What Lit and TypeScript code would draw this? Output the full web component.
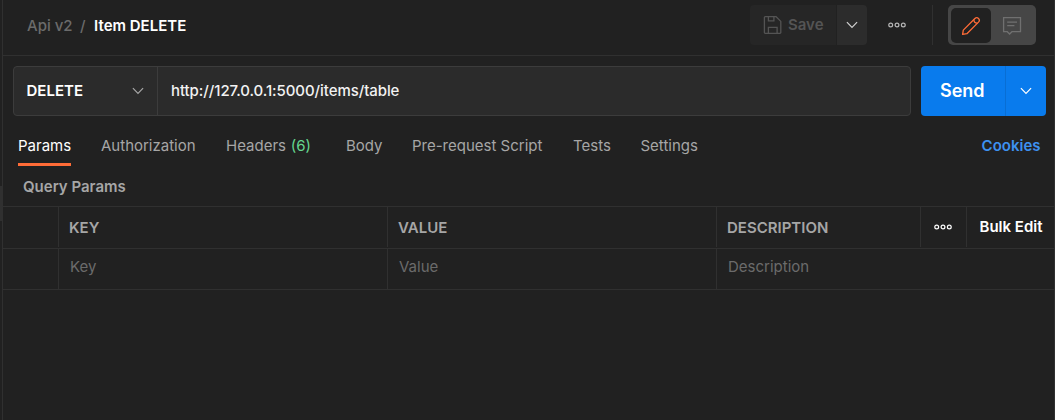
import { LitElement, html, svg, css } from "lit";
import { customElement } from "lit/decorators.js";

const chevron = html`<svg class="chev" width="12" height="8" viewBox="0 0 12 8"><path d="M.9 1.2 6 6.3l5.1-5.1" fill="none" stroke="currentColor" stroke-width="1.2"/></svg>`;
const dots = html`<svg class="dots" width="20" height="8" viewBox="0 0 20 8" fill="none" stroke="currentColor" stroke-width="1.2">
  ${[3.7, 10, 16.3].map((x) => svg`<circle cx=${x} cy="4" r="1.9"/>`)}
</svg>`;
const disk = html`<svg width="20" height="20" viewBox="0 0 20 20" fill="none" stroke="currentColor" stroke-width="1.3">
  <path d="M2.2 1.7h10.9l4.7 4.7v11.1a.8.8 0 0 1-.8.8H2.2a.8.8 0 0 1-.8-.8v-15a.8.8 0 0 1 .8-.8Z"/>
  <path d="M5.4 1.9v4h5.5v-4M5.4 18.2v-5.9h8.7v5.9"/>
</svg>`;
const pencil = html`<svg width="20" height="20" viewBox="0 0 20 20" fill="none" stroke="currentColor" stroke-width="1.3" stroke-linejoin="round">
  <path d="M1.6 18.4 2.3 14.1 13.9 2.5a2.5 2.5 0 0 1 3.6 3.6L5.9 17.7Z"/>
  <path d="M12.9 3.5c-.2 2.4 1.2 3.8 3.6 3.6"/>
</svg>`;
const comment = html`<svg width="20" height="20" viewBox="0 0 20 20" fill="none" stroke="currentColor" stroke-width="1.3">
  <path d="M1.6 1.7h16.9v14H9.9L7.6 18l-2.3-2.3H1.6Z"/><path d="M5.2 6.1h9.8M5.2 9.7h7.2"/>
</svg>`;

@customElement("app-root")
export class AppRoot extends LitElement {
  static styles = css`
    :host { display: block; font-family: Inter, sans-serif; font-size: 15px; line-height: 20px; color: #a6a6a6; }
    * { box-sizing: border-box; }
    svg { display: block; flex: none; }
    .page { display: flex; width: 1055px; height: 420px; background: #212121; overflow: hidden; white-space: nowrap; }
    .gutter { width: 3px; border-right: 1px solid #303030; padding-top: 186px; }
    .thumb { width: 2px; height: 35px; background: #303030; }
    .main { width: 1052px; border-right: 1px solid #303030; }
    .top { display: flex; height: 56px; border-bottom: 1px solid #303030; padding: 5px 18px 0 24px; }
    .crumbs { flex: 1; display: flex; padding-top: 11px; font-weight: 500; color: #6b6b6b; }
    .slash { margin: 0 8.5px 0 7.5px; }
    .name { color: #fff; font-weight: 600; }
    .save { display: flex; align-items: center; width: 86px; height: 40px; background: #262626; border-radius: 4px 0 0 4px; padding-left: 13px; color: #545454; font-weight: 600; }
    .save span { margin-left: 5px; }
    .save-more { display: flex; align-items: center; justify-content: center; width: 30px; height: 40px; margin-left: 1px; background: #2c2c2c; border-radius: 0 4px 4px 0; color: #d0d0d0; }
    .more { display: flex; align-items: center; height: 40px; width: 66px; padding-left: 20px; border-right: 1px solid #303030; color: #b8b8b8; }
    .toggle { display: flex; width: 88px; height: 40px; margin-left: 15px; padding: 3px; background: #464646; border-radius: 5px; }
    .edit, .note { display: flex; align-items: center; justify-content: center; height: 35px; }
    .edit { width: 40px; background: #212121; border-radius: 5px; color: #ff6c37; }
    .note { width: 42px; color: #707070; }
    .request { display: flex; padding: 10px 8px 0 10px; }
    .field { display: flex; width: 898px; height: 50px; background: #2b2b2b; border: 1px solid #3c3c3c; border-radius: 4px; }
    .method { display: flex; align-items: center; justify-content: space-between; width: 144px; padding: 0 13px 0 12.5px; border-right: 1px solid #3c3c3c; color: #fff; font-weight: 600; }
    .method .chev { color: #a6a6a6; }
    .url { padding: 14px 0 0 13px; color: #f2f2f2; font-weight: 450; letter-spacing: -.07px; }
    .send { display: flex; width: 125px; height: 50px; margin-left: 10px; background: #097bed; border-radius: 4px; color: #fff; }
    .send-label { width: 85px; border-right: 1px solid #086ed4; padding: 14px 0 0 19px; font-size: 18px; line-height: 22px; font-weight: 600; }
    .send-more { display: flex; flex: 1; align-items: center; justify-content: center; }
    .tabs { display: grid; grid-template-columns: 83px 125px 120px 66px 161px 67.5px 1fr auto; padding: 20px 13.5px 0 15px; height: 50px; }
    .tab { justify-self: start; height: 30px; }
    .active { color: #fff; border-bottom: 3px solid #ff6c37; }
    .count { color: #65d68f; margin-left: .5px; }
    .cookies { color: #3d91f0; font-weight: 600; }
    .title { height: 40px; padding: 11px 0 0 20px; font-weight: 600; }
    .row { display: grid; grid-template-columns: 56px 329px 329px 1fr; border-top: 1px solid #303030; }
    .head { grid-template-columns: 56px 329px 329px 204px 46px 1fr; height: 42px; padding-bottom: 1px; font-weight: 600; }
    .blank { height: 42px; border-bottom: 1px solid #303030; color: #6b6b6b; }
    .cell { border-right: 1px solid #303030; padding: 11px 0 0 10px; }
    .blank .cell { padding: 8px 0 0 11px; }
    .cell:last-child { border-right: 0; }
    .options { padding: 16px 0 0 12px; color: #fff; }
    .bulk { padding: 10px 0 0 12.5px; color: #fff; }
  `;

  render() {
    const tabs = ["Params", "Authorization", "Headers", "Body", "Pre-request Script", "Tests", "Settings"];
    return html`<div class="page">
      <div class="gutter"><div class="thumb"></div></div>
      <div class="main">
        <div class="top">
          <div class="crumbs"><span>Api v2</span><span class="slash">/</span><span class="name">Item DELETE</span></div>
          <div class="save">${disk}<span>Save</span></div>
          <div class="save-more">${chevron}</div>
          <div class="more">${dots}</div>
          <div class="toggle"><div class="edit">${pencil}</div><div class="note">${comment}</div></div>
        </div>
        <div class="request">
          <div class="field">
            <div class="method"><span>DELETE</span>${chevron}</div>
            <div class="url">http://127.0.0.1:5000/items/table</div>
          </div>
          <div class="send"><div class="send-label">Send</div><div class="send-more">${chevron}</div></div>
        </div>
        <div class="tabs">
          ${tabs.map((t, i) => html`<div class="tab ${i === 0 ? "active" : ""}">${t}${t === "Headers" ? html` <span class="count">(6)</span>` : ""}</div>`)}
          <div class="cookies">Cookies</div>
        </div>
        <div class="title">Query Params</div>
        <div class="row head">
          <div class="cell"></div><div class="cell">KEY</div><div class="cell">VALUE</div><div class="cell">DESCRIPTION</div>
          <div class="cell options">${dots}</div><div class="cell bulk">Bulk Edit</div>
        </div>
        <div class="row blank">
          <div class="cell"></div><div class="cell">Key</div><div class="cell">Value</div><div class="cell">Description</div>
        </div>
      </div>
    </div>`;
  }
}
